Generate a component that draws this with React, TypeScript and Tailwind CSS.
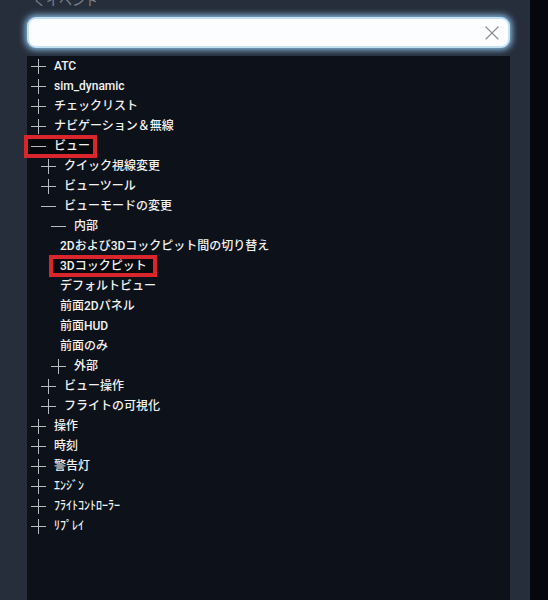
import { X } from "lucide-react";

type Row = {
  label: string;
  level: number;
  kind: "plus" | "minus" | "leaf";
  mark?: boolean;
};

const rows: Row[] = [
  { label: "ATC", level: 0, kind: "plus" },
  { label: "sim_dynamic", level: 0, kind: "plus" },
  { label: "チェックリスト", level: 0, kind: "plus" },
  { label: "ナビゲーション＆無線", level: 0, kind: "plus" },
  { label: "ビュー", level: 0, kind: "minus", mark: true },
  { label: "クイック視線変更", level: 1, kind: "plus" },
  { label: "ビューツール", level: 1, kind: "plus" },
  { label: "ビューモードの変更", level: 1, kind: "minus" },
  { label: "内部", level: 2, kind: "minus" },
  { label: "2Dおよび3Dコックピット間の切り替え", level: 3, kind: "leaf" },
  { label: "3Dコックピット", level: 3, kind: "leaf", mark: true },
  { label: "デフォルトビュー", level: 3, kind: "leaf" },
  { label: "前面2Dパネル", level: 3, kind: "leaf" },
  { label: "前面HUD", level: 3, kind: "leaf" },
  { label: "前面のみ", level: 3, kind: "leaf" },
  { label: "外部", level: 2, kind: "plus" },
  { label: "ビュー操作", level: 1, kind: "plus" },
  { label: "フライトの可視化", level: 1, kind: "plus" },
  { label: "操作", level: 0, kind: "plus" },
  { label: "時刻", level: 0, kind: "plus" },
  { label: "警告灯", level: 0, kind: "plus" },
  { label: "ｴﾝｼﾞﾝ", level: 0, kind: "plus" },
  { label: "ﾌﾗｲﾄｺﾝﾄﾛｰﾗｰ", level: 0, kind: "plus" },
  { label: "ﾘﾌﾟﾚｲ", level: 0, kind: "plus" },
];

function Toggle({ kind }: { kind: "plus" | "minus" }) {
  return (
    <svg width="15" height="15" viewBox="0 0 15 15" className="shrink-0">
      <line x1="0" y1="7.5" x2="15" y2="7.5" stroke="#b8bcc2" strokeWidth="1" />
      {kind === "plus" && (
        <line x1="7.5" y1="0" x2="7.5" y2="15" stroke="#b8bcc2" strokeWidth="1" />
      )}
    </svg>
  );
}

function TreeRow({ row }: { row: Row }) {
  const indent = row.kind === "leaf" ? 3 + row.level * 10 : 4 + row.level * 10;
  const content = (
    <>
      {row.kind !== "leaf" && <Toggle kind={row.kind} />}
      <span className="whitespace-nowrap">{row.label}</span>
    </>
  );
  return (
    <div className="h-5 flex items-center" style={{ paddingLeft: indent }}>
      {row.mark ? (
        <span
          className={
            row.kind === "leaf"
              ? "flex items-center h-[22px] -ml-[11px] pl-[7px] pr-[6px] border-[4px] border-[#d9262c] bg-[#07090d]"
              : "flex items-center gap-2 h-[23px] -ml-[7px] pl-[3px] pr-[3px] border-[4px] border-[#d9262c] bg-[#07090d]"
          }
        >
          {content}
        </span>
      ) : (
        <span className="flex items-center gap-2">{content}</span>
      )}
    </div>
  );
}

export default function App() {
  return (
    <div
      className="h-[600px] w-[548px] flex overflow-hidden bg-[#05060e]"
      style={{ fontFamily: "Roboto, 'Noto Sans CJK JP', sans-serif" }}
    >
      <div className="w-[530px] h-full bg-[#272e3b] pl-[27px] pr-[20px] flex flex-col">
        <div className="-mt-[7px] pl-[6px] h-[16px] text-[13px] text-[#7d838d] leading-[16px]">
          くイベント
        </div>
        <div className="mt-[8px] h-[31px] rounded-[9px] bg-[#fbfdff] border-2 border-[#c4e0f3] shadow-[0_0_6px_2px_#86bbe0] flex items-center justify-end pr-[4px]">
          <X className="w-[24px] h-[24px] text-[#8a8d93]" strokeWidth={1.1} />
        </div>
        <div className="mt-[8px] flex-1 bg-[#0d121a] text-[12px] font-medium text-[#f2f2f2] pt-0">
          {rows.map((r, i) => (
            <TreeRow key={i} row={r} />
          ))}
        </div>
      </div>
    </div>
  );
}
